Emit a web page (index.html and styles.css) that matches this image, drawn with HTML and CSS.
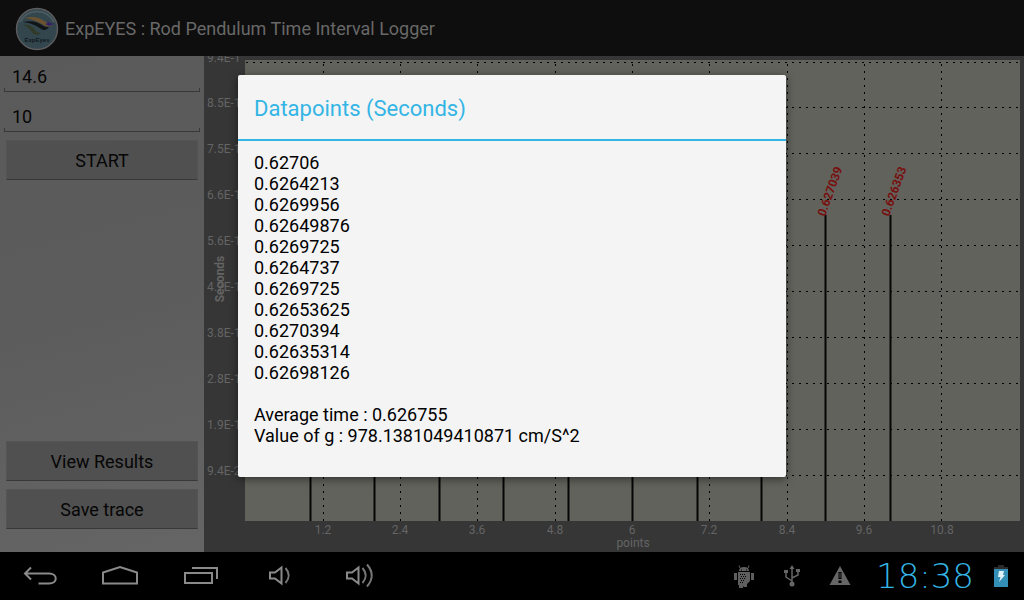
FILE: index.html
```html
<!DOCTYPE html>
<html lang="en">
<head>
<meta charset="utf-8">
<title>ExpEYES : Rod Pendulum Time Interval Logger</title>
<link rel="stylesheet" href="styles.css">
</head>
<body>
<div class="screen">
  <div class="app">
    <header class="app-bar">
      <svg class="logo" viewBox="0 0 44 44" aria-hidden="true">
        <circle cx="22" cy="22" r="20.5" fill="#33464e" stroke="#5d5d60" stroke-width="1.4"/>
        <path d="M5 15 A19 19 0 0 1 39 15" fill="none" stroke="#4b5a60" stroke-width="2"/>
        <path d="M9 11 C17 9 24 10 29 14 C32 16 35 17 38 17 C36 20 33 20 30 19 C24 15 18 12 9 11Z" fill="#6d5230"/>
        <path d="M8 15 C17 13 22 15 27 18 C30 20 32 20 34 20 C32 23 29 24 26 22 C20 18 16 16 8 15Z" fill="#111517"/>
        <path d="M8 18 C14 17 17 19 20 23 C21 25 24 26 26 26 C23 29 19 28 17 25 C14 21 12 19 8 18Z" fill="#303a26"/>
        <path d="M30 17 L33 16 L32 14 L35 16 L39 17 L34 19Z" fill="#33216b"/>
        <text x="22" y="35" text-anchor="middle" class="logo-text">ExpEyes</text>
      </svg>
      <h1 class="app-title">ExpEYES : Rod Pendulum Time Interval Logger</h1>
    </header>
    <main class="content">
      <form class="sidebar">
        <div class="field"><input class="field-input" type="text" value="14.6" aria-label="Length"></div>
        <div class="field"><input class="field-input" type="text" value="10" aria-label="Number of readings"></div>
        <button class="btn" type="button">START</button>
        <div class="spacer"></div>
        <button class="btn" type="button">View Results</button>
        <button class="btn" type="button">Save trace</button>
      </form>
      <svg class="chart" viewBox="0 0 820 496" preserveAspectRatio="none" role="img" aria-label="Seconds against points">
        <rect class="plot" x="41" y="4" width="775" height="461"/>
        <path class="grid" d="M42 6.5H816M42 51.5H816M42 97.5H816M42 143.5H816M42 189.5H816M42 235.5H816M42 281.5H816M42 327.5H816M42 373.5H816M42 419.5H816"/>
        <path class="grid" d="M119.500 8V465M196.500 8V465M273.500 8V465M351.500 8V465M428.500 8V465M505.500 8V465M583.500 8V465M660.500 8V465M737.500 8V465"/>
        <path class="bars" d="M106.500 159V465M170.500 159V465M235.500 159V465M299.500 159V465M364.500 159V465M428.500 159V465M493.500 159V465M557.500 159V465M621.500 159V465M686.500 159V465"/>
        <text class="value" transform="translate(621 161) rotate(-70)">0.627039</text>
        <text class="value" transform="translate(685 161) rotate(-70)">0.626353</text>
        <g class="axis">
          <text x="3" y="6">9.4E-1</text>
          <text x="3" y="51">8.5E-1</text>
          <text x="3" y="97">7.5E-1</text>
          <text x="3" y="143">6.6E-1</text>
          <text x="3" y="189">5.6E-1</text>
          <text x="3" y="235">4.7E-1</text>
          <text x="3" y="281">3.8E-1</text>
          <text x="3" y="327">2.8E-1</text>
          <text x="3" y="373">1.9E-1</text>
          <text x="3" y="419">9.4E-2</text>
        </g>
        <g class="axis axis-x">
          <text x="119" y="478">1.2</text>
          <text x="196" y="478">2.4</text>
          <text x="273" y="478">3.6</text>
          <text x="351" y="478">4.8</text>
          <text x="428" y="478">6</text>
          <text x="505" y="478">7.2</text>
          <text x="583" y="478">8.4</text>
          <text x="660" y="478">9.6</text>
          <text x="738" y="478">10.8</text>
          <text x="429" y="491">points</text>
          <text class="axis-title" transform="translate(20 223) rotate(-90)">Seconds</text>
        </g>
      </svg>
    </main>
    <div class="overlay">
      <section class="dialog" role="dialog" aria-labelledby="dialog-title">
        <h2 class="dialog-title" id="dialog-title">Datapoints (Seconds)</h2>
        <div class="dialog-body">
          <ul class="points">
            <li>0.62706</li>
            <li>0.6264213</li>
            <li>0.6269956</li>
            <li>0.62649876</li>
            <li>0.6269725</li>
            <li>0.6264737</li>
            <li>0.6269725</li>
            <li>0.62653625</li>
            <li>0.6270394</li>
            <li>0.62635314</li>
            <li>0.62698126</li>
          </ul>
          <p class="summary">Average time : 0.626755</p>
          <p class="summary">Value of g : 978.1381049410871 cm/S^2</p>
        </div>
      </section>
    </div>
  </div>
  <footer class="system-bar">
    <nav class="nav">
      <button class="nav-btn" type="button" aria-label="Back">
        <svg viewBox="0 0 40 32"><path d="M10 3.500 L4 9.500 L10 15.500 M4 9.500 H28 C37 9.500 37 19.500 28 19.500 H17.500"/></svg>
      </button>
      <button class="nav-btn" type="button" aria-label="Home">
        <svg viewBox="0 0 40 32"><path d="M2 19.500 V8.500 L19 3 L36 8.500 V19.500Z"/></svg>
      </button>
      <button class="nav-btn" type="button" aria-label="Recent apps">
        <svg viewBox="0 0 40 32"><path d="M4 9 H31 V19 H4Z M11 4 H36 V15"/></svg>
      </button>
      <button class="nav-btn" type="button" aria-label="Volume down">
        <svg viewBox="0 0 40 32"><path d="M9 8.500 H14 L20.500 3.500 V19.500 L14 14.500 H9Z"/><path class="wave" d="M24.500 4 Q31 11.500 24.500 19"/></svg>
      </button>
      <button class="nav-btn" type="button" aria-label="Volume up">
        <svg viewBox="0 0 40 32"><path d="M6 8.500 H11 L17.500 3.500 V19.500 L11 14.500 H6Z"/><path class="wave" d="M21.500 4 Q28 11.500 21.500 19 M26 0.500 Q35.500 11.500 26 22.500"/></svg>
      </button>
    </nav>
    <div class="status">
      <svg class="status-icon" viewBox="0 0 24 24" aria-hidden="true">
        <path d="M7 7 Q7 3 12 3 Q17 3 17 7Z M2 9H5V16H2Z M19 9H22V16H19Z M6 8H18V17L15 20V23H12L11 22V24H7V21H6V8Z" fill="#5e5e5e"/>
        <path d="M8 4 L7 1.500 M16 4 L17 1.500" stroke="#5e5e5e"/>
        <path d="M9 6h1M14 6h1" stroke="#000"/>
        <path d="M8 10.500h5M9 12.500h5M8 14.500h5M9 16.500h4M8 18.500h4" stroke="#000" stroke-dasharray="1 1"/>
      </svg>
      <svg class="status-icon" viewBox="0 0 24 24" aria-hidden="true">
        <path d="M12 3V20M12 17L6 13V8M12 14L18 11V6" fill="none" stroke="#666" stroke-width="1.500"/>
        <circle cx="12" cy="20" r="2.500" fill="#666"/>
        <path d="M12 1L14.500 5H9.500Z M4 6H8V9H4Z M16 5H20V8H16Z" fill="#666"/>
      </svg>
      <svg class="status-icon" viewBox="0 0 24 24" aria-hidden="true">
        <path d="M12 2L22.500 21H1.500Z" fill="#666"/>
        <path d="M10.500 8H13.500V15H10.500Z M10.500 16.500H13.500V19H10.500Z" fill="#000"/>
        <path d="M12 9V14" stroke="#555"/>
      </svg>
      <time class="clock">18:38</time>
      <svg class="battery" viewBox="0 0 14 22" aria-hidden="true">
        <path d="M4 0H10V2H14V22H0V2H4Z" fill="#2b2b2b"/>
        <rect y="4" width="14" height="18" fill="#338fb6"/>
        <path d="M5 6H10L9 10H11L5 17L6.500 12H4Z" fill="#dff1f7"/>
      </svg>
    </div>
  </footer>
</div>
</body>
</html>
```
FILE: styles.css
```css
* { box-sizing: border-box; }

body {
  margin: 0;
  font-family: Roboto, "Liberation Sans", sans-serif;
  background: #000;
}

h1, h2, p, ul { margin: 0; padding: 0; font-weight: 400; }

.screen {
  display: flex;
  flex-direction: column;
  min-height: 100vh;
}

.app {
  position: relative;
  display: flex;
  flex: 1;
  flex-direction: column;
}

.app-bar {
  display: flex;
  align-items: center;
  gap: 6px;
  height: 56px;
  padding: 1px 15px 0;
  background: #0e0e0e;
}

.logo { width: 44px; height: 44px; }
.logo-text { font: 700 6px "Liberation Sans", sans-serif; fill: #10191d; }
.app-title { font-size: 18px; line-height: 24px; color: #686868; }

.content {
  display: grid;
  flex: 1;
  grid-template-columns: 204px 1fr;
}

.sidebar {
  display: flex;
  flex-direction: column;
  gap: 8px;
  padding: 4px 6px 23px;
  background: linear-gradient(165deg, #5a5a5a, #5c5c5c 50%, #656565);
}

.field {
  position: relative;
  height: 32px;
  margin: 0 -2px;
  border-bottom: 1px solid #393939;
}

.field::after {
  position: absolute;
  right: 0;
  bottom: 0;
  left: 0;
  height: 3px;
  border: solid #393939;
  border-width: 0 1px;
  content: "";
}

.field-input {
  width: 100%;
  height: 32px;
  padding: 0 8px;
  border: 0;
  outline: 0;
  background: transparent;
  color: #060606;
  font: 18px Roboto, "Liberation Sans", sans-serif;
}

.btn {
  height: 40px;
  padding: 0;
  border: 1px solid #545454;
  border-bottom-color: #383838;
  border-radius: 1px;
  background: #505050;
  color: #060606;
  font: 18px Roboto, "Liberation Sans", sans-serif;
}

.spacer { flex: 1; }

.chart {
  display: block;
  width: 100%;
  height: 100%;
  overflow: hidden;
  background: #363636;
}

.plot { fill: #62625c; }
.grid { fill: none; stroke: #000; stroke-width: 1; stroke-dasharray: 2 5; }
.bars { fill: none; stroke: #050505; stroke-width: 2; }
.value { fill: #780f0f; font-size: 12px; font-weight: 700; }
.axis { fill: #646464; font-size: 12px; }
.axis-x { text-anchor: middle; }
.axis-title { font-weight: 700; }

.overlay {
  position: absolute;
  inset: 0;
  display: flex;
  align-items: center;
  justify-content: center;
}

.dialog {
  width: 548px;
  max-width: 90%;
  border-radius: 2px;
  background: #f4f4f4;
  box-shadow: 0 2px 8px rgba(0, 0, 0, 0.5);
}

.dialog-title {
  padding: 20px 16px 16px;
  border-bottom: 2px solid #33b5e5;
  color: #33b5e5;
  font-size: 22px;
  line-height: 28px;
}

.dialog-body {
  padding: 11px 16px 31px;
  color: #000;
  font-size: 18px;
  line-height: 21px;
}

.points { margin-bottom: 21px; list-style: none; }

.system-bar {
  display: flex;
  align-items: center;
  justify-content: space-between;
  height: 48px;
  padding: 0 16px 0 0;
  background: #000;
}

.nav { display: flex; }

.nav-btn {
  display: flex;
  align-items: center;
  justify-content: center;
  width: 80px;
  height: 48px;
  padding: 8px 0 0 2px;
  border: 0;
  background: transparent;
}

.nav-btn svg {
  width: 40px;
  height: 32px;
  overflow: visible;
  fill: none;
  stroke: #8a8a8a;
  stroke-width: 2;
}

.nav-btn .wave { stroke: #777; }

.status { display: flex; align-items: center; gap: 24px; }
.status-icon { width: 24px; height: 24px; }

.clock {
  margin-right: -4px;
  color: #33b5e5;
  font: 200 34px/48px "DejaVu Sans", sans-serif;
}

.battery { width: 14px; height: 22px; }
```
